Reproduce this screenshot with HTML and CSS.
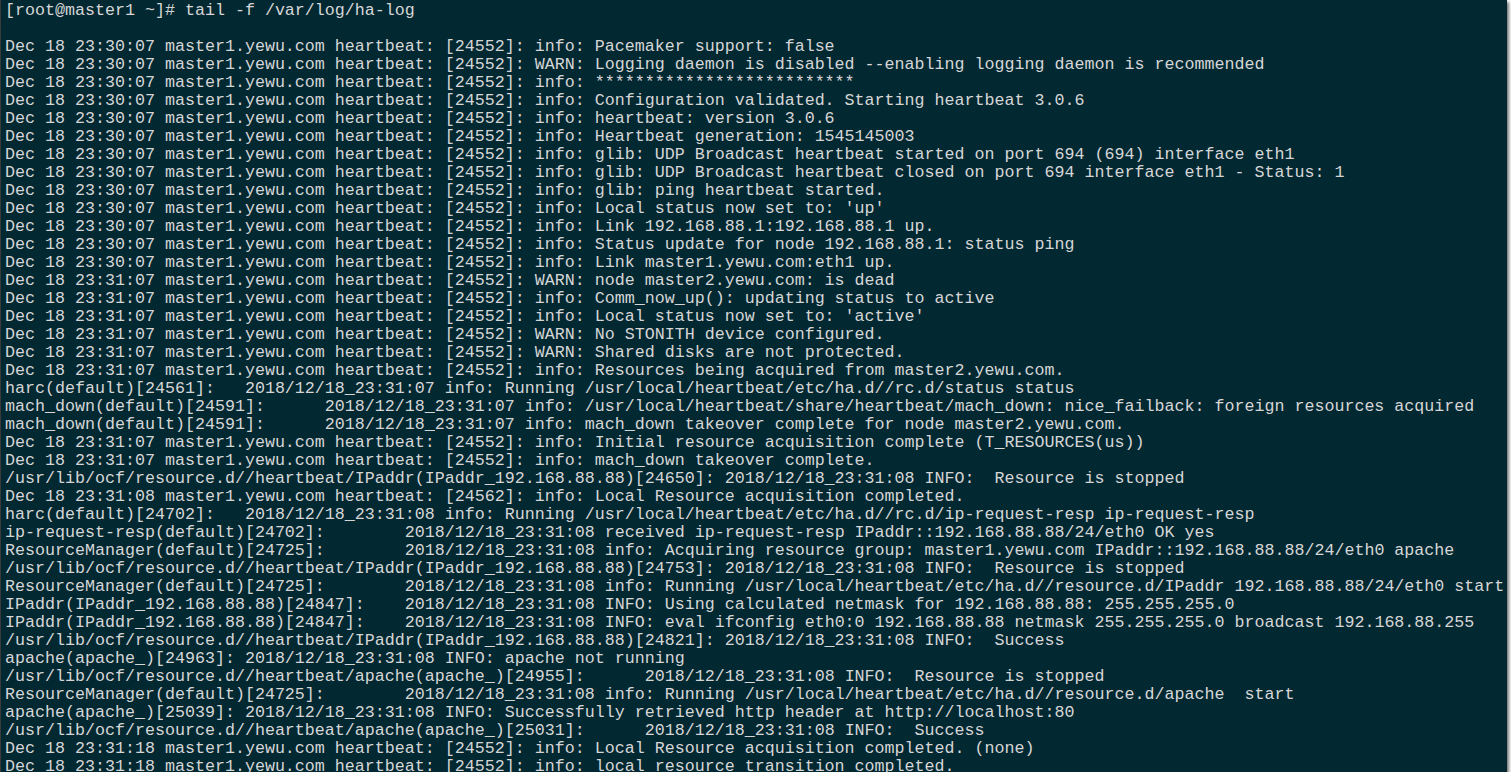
FILE: index.html
```html
<!DOCTYPE html>
<html>
<head>
<meta charset="utf-8">
<link rel="stylesheet" href="styles.css">
</head>
<body>
<div class="term"><pre class="log">[root@master1 ~]# tail -f /var/log/ha-log

Dec 18 23:30:07 master1.yewu.com heartbeat: [24552]: info: Pacemaker support: false
Dec 18 23:30:07 master1.yewu.com heartbeat: [24552]: WARN: Logging daemon is disabled --enabling logging daemon is recommended
Dec 18 23:30:07 master1.yewu.com heartbeat: [24552]: info: **************************
Dec 18 23:30:07 master1.yewu.com heartbeat: [24552]: info: Configuration validated. Starting heartbeat 3.0.6
Dec 18 23:30:07 master1.yewu.com heartbeat: [24552]: info: heartbeat: version 3.0.6
Dec 18 23:30:07 master1.yewu.com heartbeat: [24552]: info: Heartbeat generation: 1545145003
Dec 18 23:30:07 master1.yewu.com heartbeat: [24552]: info: glib: UDP Broadcast heartbeat started on port 694 (694) interface eth1
Dec 18 23:30:07 master1.yewu.com heartbeat: [24552]: info: glib: UDP Broadcast heartbeat closed on port 694 interface eth1 - Status: 1
Dec 18 23:30:07 master1.yewu.com heartbeat: [24552]: info: glib: ping heartbeat started.
Dec 18 23:30:07 master1.yewu.com heartbeat: [24552]: info: Local status now set to: 'up'
Dec 18 23:30:07 master1.yewu.com heartbeat: [24552]: info: Link 192.168.88.1:192.168.88.1 up.
Dec 18 23:30:07 master1.yewu.com heartbeat: [24552]: info: Status update for node 192.168.88.1: status ping
Dec 18 23:30:07 master1.yewu.com heartbeat: [24552]: info: Link master1.yewu.com:eth1 up.
Dec 18 23:31:07 master1.yewu.com heartbeat: [24552]: WARN: node master2.yewu.com: is dead
Dec 18 23:31:07 master1.yewu.com heartbeat: [24552]: info: Comm_now_up(): updating status to active
Dec 18 23:31:07 master1.yewu.com heartbeat: [24552]: info: Local status now set to: 'active'
Dec 18 23:31:07 master1.yewu.com heartbeat: [24552]: WARN: No STONITH device configured.
Dec 18 23:31:07 master1.yewu.com heartbeat: [24552]: WARN: Shared disks are not protected.
Dec 18 23:31:07 master1.yewu.com heartbeat: [24552]: info: Resources being acquired from master2.yewu.com.
harc(default)[24561]:	2018/12/18_23:31:07 info: Running /usr/local/heartbeat/etc/ha.d//rc.d/status status
mach_down(default)[24591]:	2018/12/18_23:31:07 info: /usr/local/heartbeat/share/heartbeat/mach_down: nice_failback: foreign resources acquired
mach_down(default)[24591]:	2018/12/18_23:31:07 info: mach_down takeover complete for node master2.yewu.com.
Dec 18 23:31:07 master1.yewu.com heartbeat: [24552]: info: Initial resource acquisition complete (T_RESOURCES(us))
Dec 18 23:31:07 master1.yewu.com heartbeat: [24552]: info: mach_down takeover complete.
/usr/lib/ocf/resource.d//heartbeat/IPaddr(IPaddr_192.168.88.88)[24650]: 2018/12/18_23:31:08 INFO:  Resource is stopped
Dec 18 23:31:08 master1.yewu.com heartbeat: [24562]: info: Local Resource acquisition completed.
harc(default)[24702]:	2018/12/18_23:31:08 info: Running /usr/local/heartbeat/etc/ha.d//rc.d/ip-request-resp ip-request-resp
ip-request-resp(default)[24702]:	2018/12/18_23:31:08 received ip-request-resp IPaddr::192.168.88.88/24/eth0 OK yes
ResourceManager(default)[24725]:	2018/12/18_23:31:08 info: Acquiring resource group: master1.yewu.com IPaddr::192.168.88.88/24/eth0 apache
/usr/lib/ocf/resource.d//heartbeat/IPaddr(IPaddr_192.168.88.88)[24753]: 2018/12/18_23:31:08 INFO:  Resource is stopped
ResourceManager(default)[24725]:	2018/12/18_23:31:08 info: Running /usr/local/heartbeat/etc/ha.d//resource.d/IPaddr 192.168.88.88/24/eth0 start
IPaddr(IPaddr_192.168.88.88)[24847]:	2018/12/18_23:31:08 INFO: Using calculated netmask for 192.168.88.88: 255.255.255.0
IPaddr(IPaddr_192.168.88.88)[24847]:	2018/12/18_23:31:08 INFO: eval ifconfig eth0:0 192.168.88.88 netmask 255.255.255.0 broadcast 192.168.88.255
/usr/lib/ocf/resource.d//heartbeat/IPaddr(IPaddr_192.168.88.88)[24821]: 2018/12/18_23:31:08 INFO:  Success
apache(apache_)[24963]: 2018/12/18_23:31:08 INFO: apache not running
/usr/lib/ocf/resource.d//heartbeat/apache(apache_)[24955]:	2018/12/18_23:31:08 INFO:  Resource is stopped
ResourceManager(default)[24725]:	2018/12/18_23:31:08 info: Running /usr/local/heartbeat/etc/ha.d//resource.d/apache  start
apache(apache_)[25039]: 2018/12/18_23:31:08 INFO: Successfully retrieved http header at http://localhost:80
/usr/lib/ocf/resource.d//heartbeat/apache(apache_)[25031]:	2018/12/18_23:31:08 INFO:  Success
Dec 18 23:31:18 master1.yewu.com heartbeat: [24552]: info: Local Resource acquisition completed. (none)
Dec 18 23:31:18 master1.yewu.com heartbeat: [24552]: info: local resource transition completed.</pre></div>
</body>
</html>
```

FILE: styles.css
```css
html, body {
  margin: 0;
  padding: 0;
  background: #ffffff;
  overflow: hidden;
}

.term {
  box-sizing: border-box;
  width: 1507px;
  height: 772px;
  background: #022832;
  border-left: 1px solid #3a3a3a;
  box-shadow: 2px 2px 3px rgba(0, 0, 0, 0.55);
  overflow: hidden;
}

.log {
  margin: 0;
  padding: 2px 0 0 4px;
  font-family: "Liberation Mono", "Courier New", monospace;
  font-size: 16.67px;
  line-height: 18px;
  color: #d6d6d6;
  white-space: pre;
  tab-size: 8;
  -moz-tab-size: 8;
}
```
